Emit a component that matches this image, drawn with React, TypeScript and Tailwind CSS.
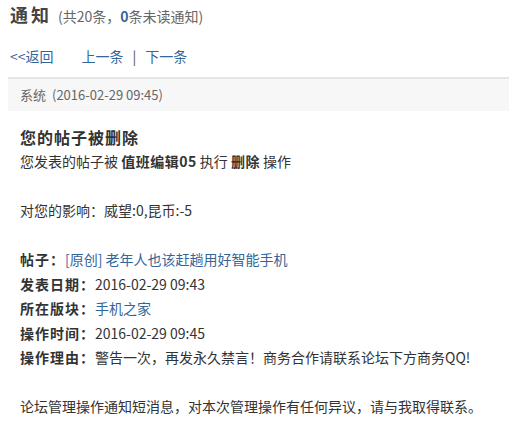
export default function App() {
  const font = "font-['Microsoft_YaHei','Noto_Sans_CJK_SC',sans-serif]";

  return (
    <div className={`${font} min-h-[440px] w-[509px] overflow-hidden bg-white text-[#333]`}>
      {/* ===== title ===== */}
      <div className="flex items-baseline pl-[10px] leading-[28px]">
        <h1 className="text-[18px] font-bold tracking-[3px] text-[#444]">通知</h1>
        <span className="ml-[6px] text-[14px] text-[#666]">
          (共20条，<b className="text-[#336699]">0</b>条未读通知)
        </span>
      </div>

      {/* ===== nav ===== */}
      <div className="mt-[14px] flex items-center pl-[10px] text-[14px] leading-[24px] text-[#336699]">
        <a href="#">&lt;&lt;返回</a>
        <a href="#" className="ml-[28px]">上一条</a>
        <span className="mx-[9px] text-[#555]">|</span>
        <a href="#">下一条</a>
      </div>

      {/* ===== message ===== */}
      <div className="ml-2 mt-[9px] flex h-[34px] items-center border-t-2 border-[#e5e5e5] bg-[#f7f7f7] pl-3 text-[13px] text-[#666]">
        系统 <span className="ml-[6px]">(2016-02-29 09:45)</span>
      </div>

      <div className="pl-5 pt-[14px] text-[14px] leading-[24.5px]">
        <h2 className="text-[16px] font-bold leading-[24px] tracking-[1px]">您的帖子被删除</h2>
        <p>
          您发表的帖子被 <b className="tracking-[0.5px]">值班编辑05</b> 执行{' '}
          <b className="tracking-[0.5px]">删除</b> 操作
        </p>
        <br />
        <p>对您的影响：威望:0,昆币:-5</p>
        <br />
        <p>
          <b className="tracking-[1px]">帖子：</b>
          <a href="#" className="text-[#336699]">[原创] 老年人也该赶趟用好智能手机</a>
        </p>
        <p>
          <b className="tracking-[1px]">发表日期：</b>2016-02-29 09:43
        </p>
        <p>
          <b className="tracking-[1px]">所在版块：</b>
          <a href="#" className="text-[#336699]">手机之家</a>
        </p>
        <p>
          <b className="tracking-[1px]">操作时间：</b>2016-02-29 09:45
        </p>
        <p>
          <b className="tracking-[1px]">操作理由：</b>警告一次，再发永久禁言！商务合作请联系论坛下方商务QQ!
        </p>
        <br />
        <p>论坛管理操作通知短消息，对本次管理操作有任何异议，请与我取得联系。</p>
      </div>
    </div>
  );
}
